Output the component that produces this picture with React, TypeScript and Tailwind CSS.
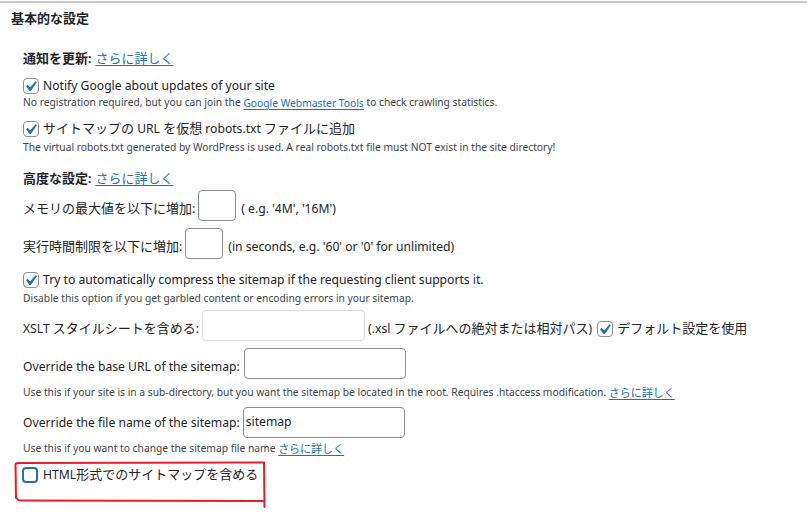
import React from "react";

const FONT = { fontFamily: '"Noto Sans", "Noto Sans CJK JP", sans-serif' };

function T({ s }: { s: string }) {
  const parts = s.split(/([\u3000-\u30ff\u4e00-\u9fff\uff00-\uffef]+)/);
  return (
    <>
      {parts.map((p, i) =>
        p === "" ? null : /[\u3000-\u30ff\u4e00-\u9fff\uff00-\uffef]/.test(p) ? (
          <span key={i}>{p}</span>
        ) : (
          <span key={i} className="text-[0.935em]">
            {p}
          </span>
        )
      )}
    </>
  );
}

function Check({ checked, focus }: { checked?: boolean; focus?: boolean }) {
  return (
    <span
      className={
        "relative inline-block w-[16px] h-[16px] shrink-0 rounded-[4px] bg-white " +
        (focus ? "border-2 border-[#2271b1]" : "border border-[#8c8f94]")
      }
    >
      {checked && (
        <svg
          viewBox="0 0 20 20"
          className="absolute left-[-4px] top-[-3px] w-[21px] h-[21px]"
        >
          <path
            d="M14.83 4.89l1.34.94-5.81 8.38H9.02L5.78 9.67l1.34-1.25 2.57 2.4z"
            fill="#2271b1"
          />
        </svg>
      )}
    </span>
  );
}

function Link({ s }: { s: string }) {
  return (
    <span className="text-[#2271b1] underline underline-offset-2">
      <T s={s} />
    </span>
  );
}

function Input({ w, value, light }: { w: string; value?: string; light?: boolean }) {
  return (
    <span
      className={
        "inline-flex items-center h-[31px] rounded-[4px] bg-white px-[2px] text-[#1d2327] " +
        w +
        (light ? " border border-[#dcdcde]" : " border border-[#8c8f94]")
      }
    >
      {value && <T s={value} />}
    </span>
  );
}

export default function App() {
  return (
    <div className="relative w-[807px] h-[519px] bg-white overflow-hidden text-[#1d2327]" style={FONT}>
      <div className="mt-px border-t-2 border-[#c8c8c8]" />
      <div className="h-[34px] -mt-[1px] flex items-center pl-[11px] text-[13px] font-bold">基本的な設定</div>
      <div className="pl-[23px] flex flex-col text-[13px]">
        <div className="mt-[13px] h-[20px] flex items-center">
          <span className="font-bold"><T s="通知を更新:" /></span>
          <span className="ml-[4px]"><Link s="さらに詳しく" /></span>
        </div>
        <div className="mt-[7px] h-[20px] flex items-center gap-[4px]">
          <Check checked />
          <span><T s="Notify Google about updates of your site" /></span>
        </div>
        <div className="h-[14px] flex items-center text-[11px] text-[#3c434a] whitespace-pre">
          <T s="No registration required, but you can join the " />
          <Link s="Google Webmaster Tools" />
          <T s=" to check crawling statistics." />
        </div>
        <div className="mt-[9px] h-[20px] flex items-center gap-[4px]">
          <Check checked />
          <span><T s="サイトマップの URL を仮想 robots.txt ファイルに追加" /></span>
        </div>
        <div className="mt-[2px] h-[14px] flex items-center text-[11px] text-[#3c434a]">
          <T s="The virtual robots.txt generated by WordPress is used. A real robots.txt file must NOT exist in the site directory!" />
        </div>
        <div className="mt-[14px] h-[20px] flex items-center">
          <span className="font-bold"><T s="高度な設定:" /></span>
          <span className="ml-[4px]"><Link s="さらに詳しく" /></span>
        </div>
        <div className="mt-[4px] h-[31px] flex items-center">
          <span><T s="メモリの最大値を以下に増加:" /></span>
          <span className="ml-[3px]"><Input w="w-[38px]" /></span>
          <span className="ml-[5px]"><T s="( e.g. '4M', '16M')" /></span>
        </div>
        <div className="mt-[7px] h-[31px] flex items-center">
          <span><T s="実行時間制限を以下に増加:" /></span>
          <span className="ml-[3px]"><Input w="w-[38px]" /></span>
          <span className="ml-[5px]"><T s="(in seconds, e.g. '60' or '0' for unlimited)" /></span>
        </div>
        <div className="mt-[8px] h-[20px] flex items-center gap-[4px]">
          <Check checked />
          <span><T s="Try to automatically compress the sitemap if the requesting client supports it." /></span>
        </div>
        <div className="mt-[2px] h-[14px] flex items-center text-[11px] text-[#3c434a]">
          <T s="Disable this option if you get garbled content or encoding errors in your sitemap." />
        </div>
        <div className="mt-[7px] h-[31px] flex items-center">
          <span className="whitespace-pre"><T s="XSLT スタイルシートを含める:" /></span>
          <span className="ml-[3px]"><Input w="w-[163px]" light /></span>
          <span className="ml-[3px] whitespace-pre"><T s="(.xsl ファイルへの絶対または相対パス)" /></span>
          <span className="ml-[5px] flex"><Check checked /></span>
          <span className="ml-[4px]"><T s="デフォルト設定を使用" /></span>
        </div>
        <div className="mt-[7px] h-[31px] flex items-center">
          <span><T s="Override the base URL of the sitemap:" /></span>
          <span className="ml-[4px]"><Input w="w-[162px]" /></span>
        </div>
        <div className="mt-[4px] h-[14px] flex items-center text-[11px] text-[#3c434a] whitespace-pre">
          <T s="Use this if your site is in a sub-directory, but you want the sitemap be located in the root. Requires .htaccess modification. " />
          <Link s="さらに詳しく" />
        </div>
        <div className="mt-[7px] h-[31px] flex items-center">
          <span><T s="Override the file name of the sitemap:" /></span>
          <span className="ml-[3px]"><Input w="w-[162px]" value="sitemap" /></span>
        </div>
        <div className="mt-[4px] h-[14px] flex items-center text-[11px] text-[#3c434a] whitespace-pre">
          <T s="Use this if you want to change the sitemap file name " />
          <Link s="さらに詳しく" />
        </div>
        <div className="mt-[9px] -ml-[1px] h-[20px] flex items-center gap-[5px]">
          <Check focus />
          <span><T s="HTML形式でのサイトマップを含める" /></span>
        </div>
      </div>
      <svg className="absolute left-0 top-0 pointer-events-none" width="807" height="519">
        <path
          d="M16 498 L15.5 465 Q15.5 463 18 463 L264 462.5 L264.5 507 M264.5 501 L21 500.5 Q16.5 500.5 16 496"
          fill="none"
          stroke="#e0202f"
          strokeWidth="2"
          strokeLinecap="round"
          strokeLinejoin="round"
        />
      </svg>
    </div>
  );
}
